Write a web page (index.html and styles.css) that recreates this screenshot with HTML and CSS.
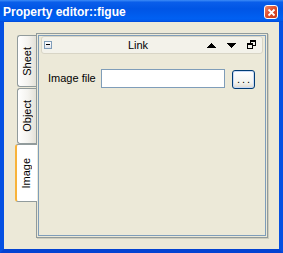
FILE: index.html
```html
<!DOCTYPE html>
<html lang="en">
<head>
    <meta charset="UTF-8">
    <title>Property editor::figue</title>
    <link rel="stylesheet" href="styles.css">
</head>
<body>
    <div class="window">
        <div class="titlebar">
            <span class="title">Property editor::figue</span>
            <span class="close-btn">
                <svg width="11" height="11" viewBox="0 0 11 11">
                    <path d="M2.5 2.5 L8.5 8.5 M8.5 2.5 L2.5 8.5" stroke="#fff" stroke-width="1.8" fill="none"/>
                </svg>
            </span>
        </div>
        <div class="frame">
            <div class="client">
                <div class="tab-bar">
                    <div class="tab tab-sheet"><span>Sheet</span></div>
                    <div class="tab tab-object"><span>Object</span></div>
                    <div class="tab tab-image active"><span>Image</span></div>
                </div>
                <div class="pane">
                    <div class="dock">
                        <div class="dock-title">
                            <span class="collapse-btn"></span>
                            <span class="dock-name">Link</span>
                            <svg class="dock-icon" width="9" height="5" viewBox="0 0 9 5" shape-rendering="crispEdges">
                                <rect x="4" y="0" width="1" height="1"/>
                                <rect x="3" y="1" width="3" height="1"/>
                                <rect x="2" y="2" width="5" height="1"/>
                                <rect x="1" y="3" width="7" height="1"/>
                                <rect x="0" y="4" width="9" height="1"/>
                            </svg>
                            <svg class="dock-icon icon-gap" width="9" height="5" viewBox="0 0 9 5" shape-rendering="crispEdges">
                                <rect x="0" y="0" width="9" height="1"/>
                                <rect x="1" y="1" width="7" height="1"/>
                                <rect x="2" y="2" width="5" height="1"/>
                                <rect x="3" y="3" width="3" height="1"/>
                                <rect x="4" y="4" width="1" height="1"/>
                            </svg>
                            <svg class="dock-icon icon-gap float-icon" width="9" height="9" viewBox="0 0 9 9" shape-rendering="crispEdges">
                                <rect x="3" y="0" width="6" height="2"/>
                                <rect x="3" y="0" width="1" height="4"/>
                                <rect x="8" y="0" width="1" height="6"/>
                                <rect x="6" y="5" width="3" height="1"/>
                                <rect x="0" y="3" width="6" height="2"/>
                                <rect x="0" y="3" width="1" height="6"/>
                                <rect x="5" y="3" width="1" height="6"/>
                                <rect x="0" y="8" width="6" height="1"/>
                            </svg>
                        </div>
                        <div class="dock-body">
                            <div class="field-row">
                                <label for="image-file">Image file</label>
                                <input type="text" id="image-file">
                                <button type="button">...</button>
                            </div>
                        </div>
                    </div>
                </div>
            </div>
        </div>
    </div>
</body>
</html>
```

FILE: styles.css
```css
html, body {
    margin: 0;
    padding: 0;
}

body {
    font-family: "Liberation Sans", Arial, sans-serif;
    font-size: 11px;
    color: #000;
}

.window {
    width: 283px;
    height: 253px;
    display: flex;
    flex-direction: column;
}

.titlebar {
    height: 22px;
    display: flex;
    align-items: flex-start;
    background: linear-gradient(180deg, #3d8cf7 0, #0a5eea 10%, #0055e5 40%, #0060f2 85%, #0058ea 95%, #0046d5 100%);
}

.title {
    margin: 5px 0 0 3px;
    line-height: 14px;
    font-size: 12px;
    font-weight: bold;
    color: #fff;
}

.close-btn {
    margin: 5px 5px 0 auto;
    width: 12px;
    height: 12px;
    border: 1px solid #fff;
    border-radius: 3px;
    background: linear-gradient(135deg, #f08a6c 0, #e0502e 45%, #c8381a 100%);
    display: flex;
    align-items: center;
    justify-content: center;
}

.frame {
    flex: 1;
    display: flex;
    border: 4px solid #0550e2;
    border-top: 0;
    border-bottom-color: #0343d2;
}

.client {
    flex: 1;
    display: flex;
    background-color: #ece9d8;
    padding: 11px 10px 10px 11px;
}

/* vertical tabs */
.tab-bar {
    width: 21px;
    padding-top: 2px;
    display: flex;
    flex-direction: column;
    position: relative;
    z-index: 1;
}

.tab {
    margin-left: 2px;
    width: 19px;
    box-sizing: border-box;
    border: 1px solid #919b9c;
    border-right: 0;
    border-radius: 3px 0 0 3px;
    background: linear-gradient(90deg, #ffffff 0, #f4f3ef 55%, #e3e1d8 100%);
    display: flex;
    align-items: center;
    justify-content: center;
}

.tab span {
    writing-mode: vertical-rl;
    transform: rotate(180deg);
    line-height: 11px;
}

.tab-sheet {
    height: 52px;
}

.tab-object {
    height: 56px;
    margin-top: 1px;
}

.tab-image {
    height: 58px;
}

.tab.active {
    margin-left: 0;
    width: 22px;
    margin-right: -1px;
    background: #fff;
    border-left: 2px solid #f8b33a;
    padding-right: 2px;
}

.pane {
    flex: 1;
    display: flex;
    padding: 1px;
    border: 1px solid #919b9c;
    box-shadow: 1px 1px 0 #d0cdbd;
    margin: 0 1px 1px 0;
}

.dock {
    flex: 1;
    display: flex;
    flex-direction: column;
    border: 1px solid #7f9db9;
}

.dock-title {
    height: 18px;
    box-sizing: border-box;
    margin: 0 2px;
    border: 1px solid #d8d5c6;
    border-radius: 3px;
    background-color: #f3f2ea;
    display: flex;
    align-items: center;
}

.collapse-btn {
    margin-left: 2px;
    width: 8px;
    height: 8px;
    box-sizing: border-box;
    border: 1px solid #7f9db9;
    background: linear-gradient(#ffffff, #dfe3ea);
    position: relative;
}

.collapse-btn::after {
    content: "";
    position: absolute;
    left: 1px;
    top: 2px;
    width: 4px;
    height: 1px;
    background: #000;
}

.dock-name {
    flex: 1;
    text-align: center;
    padding-left: 17px;
}

.dock-icon {
    display: block;
    fill: #000;
}

.icon-gap {
    margin-left: 11px;
}

.float-icon {
    margin-right: 6px;
    margin-top: -2px;
}

.dock-body {
    padding: 15px 0 0 9px;
}

.field-row {
    display: flex;
    align-items: flex-start;
}

label {
    width: 53px;
    line-height: 19px;
}

input {
    width: 124px;
    height: 19px;
    box-sizing: border-box;
    border: 1px solid #7f9db9;
    background: #fff;
    padding: 0 2px;
    margin: 0;
    font: inherit;
}

button {
    margin: 1px 0 0 7px;
    width: 23px;
    height: 19px;
    box-sizing: border-box;
    border: 1px solid #003c74;
    border-radius: 3px;
    background: linear-gradient(#ffffff 0, #f3f3ef 70%, #dcd8cd 100%);
    box-shadow: inset 0 0 0 1px #c9d9f7;
    padding: 0 0 0 2px;
    font: inherit;
    letter-spacing: 2px;
    line-height: 15px;
}
```
